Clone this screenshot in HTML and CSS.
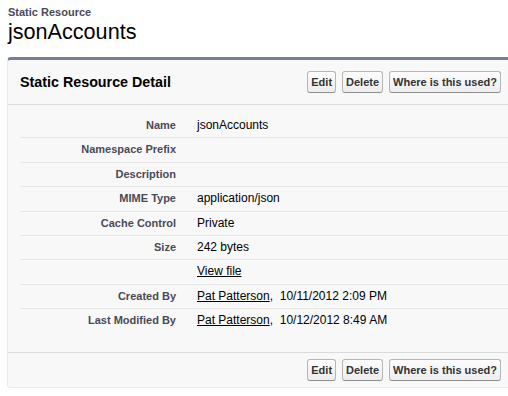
FILE: index.html
```html
<!DOCTYPE html>
<html lang="en">
<head>
    <meta charset="UTF-8">
    <meta name="viewport" content="width=device-width, initial-scale=1.0">
    <title>jsonAccounts - Static Resource</title>
    <link rel="stylesheet" href="styles.css">
</head>
<body>
    <div class="page">
        <div class="page-head">
            <div class="page-type">Static Resource</div>
            <h1 class="page-title">jsonAccounts</h1>
        </div>

        <div class="panel">
            <div class="panel-head">
                <h2>Static Resource Detail</h2>
                <div class="buttons">
                    <button class="btn">Edit</button>
                    <button class="btn">Delete</button>
                    <button class="btn">Where is this used?</button>
                </div>
            </div>

            <div class="detail">
                <div class="row">
                    <div class="label">Name</div>
                    <div class="value">jsonAccounts</div>
                </div>
                <div class="row">
                    <div class="label">Namespace Prefix</div>
                    <div class="value"></div>
                </div>
                <div class="row">
                    <div class="label">Description</div>
                    <div class="value"></div>
                </div>
                <div class="row">
                    <div class="label">MIME Type</div>
                    <div class="value">application/json</div>
                </div>
                <div class="row">
                    <div class="label">Cache Control</div>
                    <div class="value">Private</div>
                </div>
                <div class="row">
                    <div class="label">Size</div>
                    <div class="value">242 bytes</div>
                </div>
                <div class="row">
                    <div class="label"></div>
                    <div class="value"><a href="#">View file</a></div>
                </div>
                <div class="row">
                    <div class="label">Created By</div>
                    <div class="value"><a href="#">Pat Patterson</a>,&nbsp; 10/11/2012 2:09 PM</div>
                </div>
                <div class="row">
                    <div class="label">Last Modified By</div>
                    <div class="value"><a href="#">Pat Patterson</a>,&nbsp; 10/12/2012 8:49 AM</div>
                </div>
            </div>

            <div class="panel-foot">
                <div class="buttons">
                    <button class="btn">Edit</button>
                    <button class="btn">Delete</button>
                    <button class="btn">Where is this used?</button>
                </div>
            </div>
        </div>
    </div>
</body>
</html>
```

FILE: styles.css
```css
html, body {
    margin: 0;
    overflow: hidden;
}

body {
    font-family: "Liberation Sans", Arial, Helvetica, sans-serif;
    font-size: 12px;
    color: #000;
    background: #fff;
}

.page {
    padding: 6px 0 0 8px;
}

.page-type {
    font-size: 11px;
    font-weight: bold;
    line-height: 13px;
    color: #4a4a56;
}

.page-title {
    margin: 0;
    font-size: 21.6px;
    font-weight: normal;
    line-height: 25px;
}

.panel {
    box-sizing: border-box;
    width: 506px;
    margin: 13px 0 0 -1px;
    background: #f8f8f8;
    border: 1px solid #eaeaea;
    border-top: 3px solid #747e96;
    border-radius: 4px;
}

.panel-head {
    display: flex;
    align-items: center;
    justify-content: space-between;
    height: 44px;
    padding: 0 11px 0 12px;
    border-bottom: 1px solid #dbdbdb;
}

.panel-head h2 {
    margin: 0;
    font-size: 14.3px;
    font-weight: bold;
}

.buttons {
    display: flex;
    gap: 6px;
}

.btn {
    height: 22px;
    padding: 0 3px;
    font-family: "Liberation Sans", Arial, Helvetica, sans-serif;
    font-size: 11px;
    font-weight: bold;
    color: #333;
    background: linear-gradient(#fdfdfd, #ededed);
    border: 1px solid #b5b5b5;
    border-bottom-color: #8f8f8f;
    border-radius: 3px;
}

.detail {
    padding: 9px 0 19px 12px;
}

.row {
    display: grid;
    grid-template-columns: 166px 1fr;
    border-bottom: 1px solid #e6e6e6;
}

.row:last-child {
    border-bottom: none;
}

.label {
    padding: 4px 10px 4px 0;
    line-height: 15.4px;
    text-align: right;
    font-size: 11px;
    font-weight: bold;
    color: #4a4a56;
}

.value {
    padding: 4px 0 4px 11px;
    line-height: 15.4px;
}

.value a {
    color: #000;
    text-decoration: underline;
}

.panel-foot {
    display: flex;
    justify-content: flex-end;
    padding: 6px 11px 6px 0;
    border-top: 1px solid #dbdbdb;
}
```
